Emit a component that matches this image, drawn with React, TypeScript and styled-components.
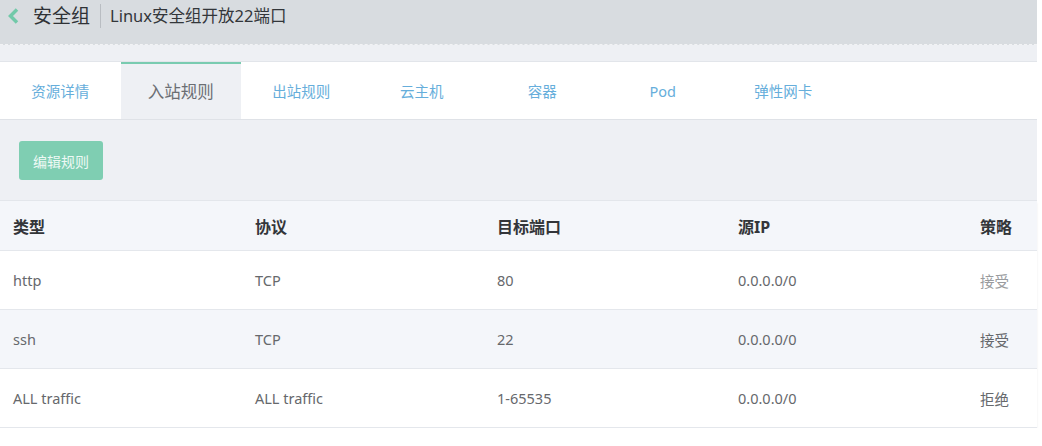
import React from 'react'
import styled, { createGlobalStyle } from 'styled-components'

const GlobalStyle = createGlobalStyle`
  html, body {
    margin: 0;
    padding: 0;
    background: #ffffff;
    font-family: "Noto Sans", "Noto Sans CJK SC", sans-serif;
  }
`

const Page = styled.div`
  width: 1037px;
  display: flex;
  flex-direction: column;
`

const TopBar = styled.header`
  height: 45px;
  background: #d8dce0;
  border-bottom: 1px dashed #f2f3f5;
  display: flex;
  align-items: center;
  padding: 0 0 12px 6px;
  box-sizing: border-box;
`

const BackIcon = styled.svg`
  width: 14px;
  height: 18px;
  margin-right: 13px;
  flex: none;
`

const Title = styled.span`
  font-size: 19px;
  color: #2f3236;
  line-height: 1;
`

const Divider = styled.span`
  width: 1px;
  height: 24px;
  background: #b9bdc2;
  margin: 0 9px 0 10px;
`

const SubTitle = styled.span`
  font-size: 16.5px;
  color: #33363a;
  line-height: 1;
`

const Band = styled.div`
  height: 16px;
  background: #eef0f4;
  border-bottom: 1px solid #e2e5ea;
`

const Tabs = styled.nav`
  height: 57px;
  background: #ffffff;
  display: flex;
  border-bottom: 1px solid #dfe2e7;
`

const Tab = styled.div<{ $active?: boolean }>`
  flex: 0 0 120.5px;
  display: flex;
  align-items: center;
  justify-content: center;
  box-sizing: border-box;
  font-size: ${p => (p.$active ? '16.5px' : '14.5px')};
  color: ${p => (p.$active ? '#6b6e73' : '#66aedb')};
  background: ${p => (p.$active ? '#eef0f4' : 'transparent')};
  border-top: 2px solid ${p => (p.$active ? '#79cbb0' : 'transparent')};
  padding-bottom: 2px;
`

const Toolbar = styled.div`
  height: 81px;
  background: #eef0f4;
  display: flex;
  align-items: center;
  padding-left: 19px;
  box-sizing: border-box;
  border-bottom: 1px solid #e3e6eb;
`

const Button = styled.button`
  width: 84px;
  height: 39px;
  border: none;
  border-radius: 3px;
  background: #7fceb2;
  color: #eef9f5;
  font-family: inherit;
  font-size: 14px;
  padding: 0;
  margin-top: 1px;
`

const Table = styled.div`
  display: flex;
  flex-direction: column;
  box-shadow: 0 2px 2px rgba(0, 0, 0, 0.08);
`

const Row = styled.div<{ $head?: boolean; $striped?: boolean }>`
  display: grid;
  grid-template-columns: 242px 242px 241px 242px 1fr;
  align-items: center;
  padding-left: 13px;
  height: ${p => (p.$head ? '50px' : '59px')};
  box-sizing: border-box;
  background: ${p => (p.$head || p.$striped ? '#f4f6fa' : '#ffffff')};
  border-bottom: 1px solid #e4e7ec;
  font-size: ${p => (p.$head ? '16px' : '14.5px')};
  font-weight: ${p => (p.$head ? 700 : 400)};
  color: ${p => (p.$head ? '#333539' : '#66686c')};
`

const Cell = styled.span<{ $muted?: boolean }>`
  color: ${p => (p.$muted ? '#999b9e' : 'inherit')};
  white-space: nowrap;
`

const rules = [
  { type: 'http', proto: 'TCP', port: '80', ip: '0.0.0.0/0', policy: '接受', muted: true },
  { type: 'ssh', proto: 'TCP', port: '22', ip: '0.0.0.0/0', policy: '接受', muted: false },
  { type: 'ALL traffic', proto: 'ALL traffic', port: '1-65535', ip: '0.0.0.0/0', policy: '拒绝', muted: false },
]

const tabs = ['资源详情', '入站规则', '出站规则', '云主机', '容器', 'Pod', '弹性网卡']

export default function App() {
  return (
    <>
      <GlobalStyle />
      <Page>
        <TopBar>
          <BackIcon viewBox="0 0 14 18">
            <path d="M11 2.5 L4.5 9 L11 15.5" fill="none" stroke="#72c9a9" strokeWidth="3.5" />
          </BackIcon>
          <Title>安全组</Title>
          <Divider />
          <SubTitle>Linux安全组开放22端口</SubTitle>
        </TopBar>
        <Band />
        <Tabs>
          {tabs.map((t, i) => (
            <Tab key={t} $active={i === 1}>
              {t}
            </Tab>
          ))}
        </Tabs>
        <Toolbar>
          <Button>编辑规则</Button>
        </Toolbar>
        <Table>
          <Row $head>
            <Cell>类型</Cell>
            <Cell>协议</Cell>
            <Cell>目标端口</Cell>
            <Cell>源IP</Cell>
            <Cell>策略</Cell>
          </Row>
          {rules.map((r, i) => (
            <Row key={r.type} $striped={i === 1}>
              <Cell>{r.type}</Cell>
              <Cell>{r.proto}</Cell>
              <Cell>{r.port}</Cell>
              <Cell>{r.ip}</Cell>
              <Cell $muted={r.muted}>{r.policy}</Cell>
            </Row>
          ))}
        </Table>
      </Page>
    </>
  )
}
